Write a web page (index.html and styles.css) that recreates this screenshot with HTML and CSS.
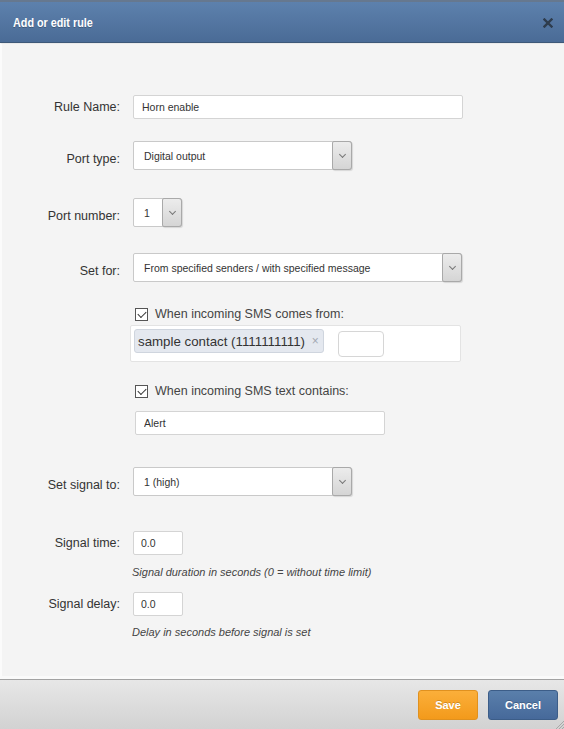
FILE: index.html
```html
<!DOCTYPE html>
<html lang="en">
  <head>
    <meta charset="UTF-8" />
    <meta name="viewport" content="width=device-width, initial-scale=1.0" />
    <title>Add or edit rule</title>
    <link rel="stylesheet" href="styles.css">
  </head>
  <body>
    <div class="dialog">
      <!-- Barra de título -->
      <div class="dialog-header">
        <span class="dialog-title">Add or edit rule</span>
        <span class="dialog-close">
          <svg width="10" height="10" viewBox="0 0 10 10">
            <path d="M1.5 1.5 L8.5 8.5 M8.5 1.5 L1.5 8.5" stroke="#2e3c4d" stroke-width="2.4" stroke-linecap="square" />
          </svg>
        </span>
      </div>

      <!-- Formulário da regra -->
      <div class="dialog-body">
        <form class="rule-form">
          <div class="row">
            <label class="row-label">Rule Name:</label>
            <input class="text-input w-lg" type="text" value="Horn enable" />
          </div>

          <div class="row row-select gap-22">
            <label class="row-label">Port type:</label>
            <div class="select w-md">
              <span class="select-value">Digital output</span>
              <span class="select-arrow"></span>
            </div>
          </div>

          <div class="row row-select gap-28">
            <label class="row-label">Port number:</label>
            <div class="select w-sm">
              <span class="select-value">1</span>
              <span class="select-arrow"></span>
            </div>
          </div>

          <div class="row row-select gap-26">
            <label class="row-label">Set for:</label>
            <div class="select w-xl">
              <span class="select-value">From specified senders / with specified message</span>
              <span class="select-arrow"></span>
            </div>
          </div>

          <div class="check-row gap-24">
            <span class="checkbox checked"></span>
            <span class="check-label">When incoming SMS comes from:</span>
          </div>

          <div class="tag-box">
            <span class="tag">sample contact (1111111111) <span class="tag-remove">×</span></span>
            <input class="tag-input" type="text" />
          </div>

          <div class="check-row gap-21">
            <span class="checkbox checked"></span>
            <span class="check-label">When incoming SMS text contains:</span>
          </div>

          <div class="sub-field gap-12">
            <input class="text-input w-alert" type="text" value="Alert" />
          </div>

          <div class="row row-select gap-32">
            <label class="row-label">Set signal to:</label>
            <div class="select w-md">
              <span class="select-value">1 (high)</span>
              <span class="select-arrow"></span>
            </div>
          </div>

          <div class="row gap-35">
            <label class="row-label">Signal time:</label>
            <input class="text-input w-num" type="text" value="0.0" />
          </div>
          <p class="help gap-10">Signal duration in seconds (0 = without time limit)</p>

          <div class="row gap-13">
            <label class="row-label">Signal delay:</label>
            <input class="text-input w-num" type="text" value="0.0" />
          </div>
          <p class="help gap-9">Delay in seconds before signal is set</p>
        </form>
      </div>

      <!-- Botões -->
      <div class="dialog-footer">
        <button type="button" class="btn btn-save">Save</button>
        <button type="button" class="btn btn-cancel">Cancel</button>
        <svg class="grip" width="9" height="9" viewBox="0 0 9 9">
          <path d="M9 1 L1 9 M9 4 L4 9 M9 7 L7 9" stroke="#a8a8a8" stroke-width="1" />
        </svg>
      </div>
    </div>
  </body>
</html>
```

FILE: styles.css
```css
/* Reset básico */
body,
form,
p,
input,
button {
  margin: 0;
  padding: 0;
  box-sizing: border-box;
}

body {
  font-family: 'Liberation Sans', Arial, sans-serif;
  color: #333;
  background: #f4f4f4;
}

.dialog {
  width: 564px;
  height: 729px;
  display: flex;
  flex-direction: column;
  background: #f4f4f4;
}

/* Cabeçalho azul */
.dialog-header {
  height: 43px;
  flex-shrink: 0;
  display: flex;
  align-items: center;
  justify-content: space-between;
  padding: 0 11px 0 13px;
  background: linear-gradient(#5d81ad, #4a6b96);
  border-top: 2px solid #66788f;
  border-bottom: 1px solid #3d5878;
  box-sizing: border-box;
}

/* Fonte estreita simulada com escala horizontal */
.dialog-title {
  display: inline-block;
  font-weight: bold;
  font-size: 13px;
  color: #fff;
  text-shadow: 0 1px 0 rgba(0, 0, 0, 0.25);
  transform: scaleX(0.83);
  transform-origin: left center;
}

.dialog-close {
  display: flex;
  margin-top: 1px;
}

.dialog-body {
  flex: 1;
  border-left: 2px solid #fbfbfb;
  border-bottom: 3px solid #fafafa;
  border-top: 1px solid #e9e9e9;
}

.rule-form {
  display: flex;
  flex-direction: column;
  padding-top: 51px;
}

/* Linhas do formulário */
.row {
  display: grid;
  grid-template-columns: 118px auto;
  column-gap: 13px;
  align-items: center;
  justify-content: start;
}

.row-label {
  text-align: right;
  font-size: 12.5px;
  color: #333;
}

.row-select .row-label {
  padding-top: 6px;
}

.gap-9 { margin-top: 9px; }
.gap-10 { margin-top: 10px; }
.gap-12 { margin-top: 12px; }
.gap-13 { margin-top: 13px; }
.gap-21 { margin-top: 21px; }
.gap-22 { margin-top: 22px; }
.gap-24 { margin-top: 24px; }
.gap-26 { margin-top: 26px; }
.gap-28 { margin-top: 28px; }
.gap-32 { margin-top: 32px; }
.gap-35 { margin-top: 35px; }

.text-input {
  height: 24px;
  border: 1px solid #d4d4d4;
  border-radius: 2px;
  background: #fff;
  font-family: 'Liberation Sans', Arial, sans-serif;
  font-size: 10.5px;
  color: #333;
  padding: 0 8px;
  outline: none;
}

.w-lg { width: 330px; }
.w-alert { width: 250px; }
.w-num { width: 50px; padding-left: 7px; }

/* Select estilizado */
.select {
  height: 29px;
  display: flex;
  align-items: center;
  background: #fff;
  border: 1px solid #c9c9c9;
  border-radius: 2px;
  box-sizing: border-box;
}

.w-sm { width: 49px; }
.w-md { width: 219px; }
.w-xl { width: 329px; }

.select-value {
  flex: 1;
  font-size: 10.5px;
  padding-left: 10px;
  color: #333;
  white-space: nowrap;
}

.select-arrow {
  align-self: stretch;
  width: 18px;
  margin: -1px -1px -1px 0;
  border: 1px solid #a9a9a9;
  border-radius: 2px 3px 3px 2px;
  background: linear-gradient(#ececec, #d5d5d5);
  box-shadow: 1px 1px 1px rgba(0, 0, 0, 0.12);
  display: flex;
  align-items: center;
  justify-content: center;
}

.select-arrow::after {
  content: '';
  width: 4px;
  height: 4px;
  border-right: 1.5px solid #777;
  border-bottom: 1.5px solid #777;
  transform: rotate(45deg);
  margin-top: -3px;
}

/* Checkboxes */
.check-row {
  display: flex;
  align-items: center;
  gap: 7px;
  margin-left: 133px;
  height: 16px;
}

.checkbox {
  width: 13px;
  height: 13px;
  border: 1px solid #555;
  background: #fff;
  box-sizing: border-box;
  display: flex;
  justify-content: center;
}

.checkbox.checked::after {
  content: '';
  width: 7px;
  height: 4px;
  border-left: 1.5px solid #333;
  border-bottom: 1.5px solid #333;
  transform: rotate(-45deg);
  margin-top: 2px;
}

.check-label {
  font-size: 12.5px;
  color: #444;
}

/* Caixa de contatos */
.tag-box {
  margin: 3px 0 0 128px;
  width: 331px;
  height: 37px;
  background: #fff;
  border: 1px solid #e3e3e3;
  border-radius: 2px;
  box-sizing: border-box;
  display: flex;
  align-items: flex-start;
  padding: 3px 0 0 3px;
  gap: 14px;
}

.tag {
  height: 24px;
  display: flex;
  align-items: center;
  padding: 0 4px 0 3px;
  background: #e4e8ef;
  border: 1px solid #cfd5de;
  border-radius: 3px;
  font-size: 13.3px;
  color: #333;
  box-sizing: border-box;
  white-space: pre;
}

.tag-remove {
  color: #a3a9b2;
  font-size: 12px;
  margin-left: 3px;
}

.tag-input {
  width: 46px;
  height: 26px;
  margin-top: 2px;
  border: 1px solid #d6d6d6;
  border-radius: 4px;
  background: #fff;
  outline: none;
}

.sub-field {
  margin-left: 133px;
}

.help {
  margin-left: 130px;
  font-size: 11px;
  font-style: italic;
  line-height: 14px;
  color: #444;
}

/* Rodapé */
.dialog-footer {
  position: relative;
  height: 50px;
  flex-shrink: 0;
  display: flex;
  justify-content: flex-end;
  align-items: flex-start;
  gap: 10px;
  padding: 10px 6px 0 0;
  border-top: 1px solid #a2a2a2;
  background: linear-gradient(#e7e7e7, #d2d2d2);
  box-sizing: border-box;
}

.btn {
  height: 30px;
  border-radius: 3px;
  font-family: 'Liberation Sans', Arial, sans-serif;
  font-weight: bold;
  font-size: 11px;
  color: #fff;
  cursor: pointer;
  text-shadow: 0 -1px 0 rgba(0, 0, 0, 0.2);
}

.btn-save {
  width: 60px;
  background: linear-gradient(#fbaf3a, #f39a1b);
  border: 1px solid #e0911f;
}

.btn-cancel {
  width: 70px;
  background: linear-gradient(#5a7fab, #46699a);
  border: 1px solid #3c5d88;
}

.grip {
  position: absolute;
  right: 0;
  bottom: 0;
}
```
